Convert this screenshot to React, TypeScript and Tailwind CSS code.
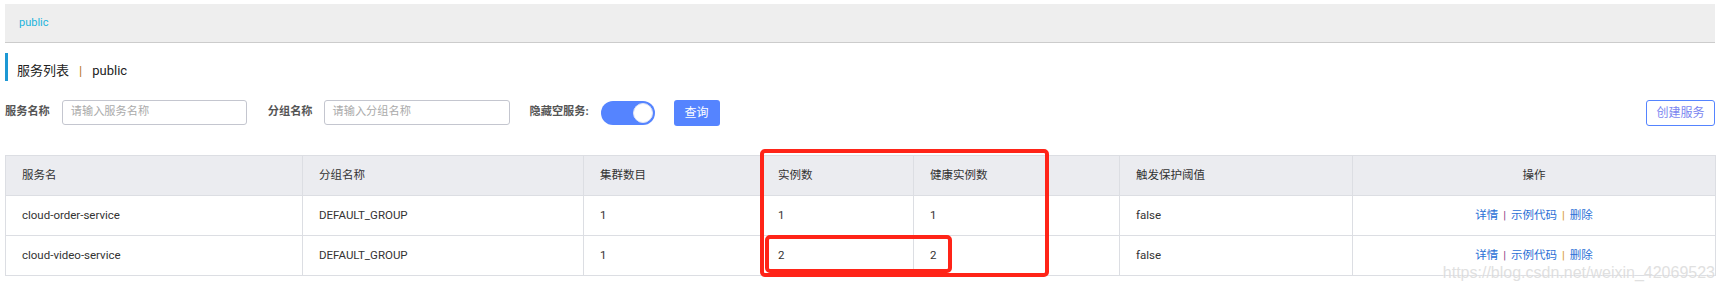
import React from 'react';

const font = { fontFamily: 'Roboto, "Noto Sans CJK SC", sans-serif' };

const columns = [
  { title: '服务名', width: 297 },
  { title: '分组名称', width: 281 },
  { title: '集群数目', width: 178 },
  { title: '实例数', width: 152 },
  { title: '健康实例数', width: 206 },
  { title: '触发保护阈值', width: 233 },
  { title: '操作', width: 363 },
];

const rows = [
  { name: 'cloud-order-service', group: 'DEFAULT_GROUP', clusters: 1, instances: 1, healthy: 1, threshold: 'false' },
  { name: 'cloud-video-service', group: 'DEFAULT_GROUP', clusters: 1, instances: 2, healthy: 2, threshold: 'false' },
];

function Actions() {
  return (
    <span className="text-[#2a6fd6]">
      详情
      <span className="mx-[5px] text-[#8a3f8a]">|</span>
      示例代码
      <span className="mx-[5px] text-[#d8962f]">|</span>
      删除
    </span>
  );
}

export default function App() {
  return (
    <div className="relative h-[290px] bg-white pt-[4px] pl-[5px] pr-[9px] text-[#333]" style={font}>
      <div className="flex h-[39px] items-center border-b border-[#cccccc] bg-[#eeeeee] pl-[14px] text-[11px] text-[#22b4dc]">
        public
      </div>

      <div className="mt-[10px] flex h-[28px] items-center border-l-[3px] border-[#1d98d4] pl-[9px] pt-[8px] text-[13px] text-[#222]">
        <span>服务列表</span>
        <span className="mx-[10px] text-[#b8772a]">|</span>
        <span>public</span>
      </div>

      <div className="mt-[19px] flex h-[25px] items-center text-[11.2px]">
        <span className="font-bold text-[#555]">服务名称</span>
        <div className="ml-[12px] flex h-[25px] w-[185px] items-center rounded-[3px] border border-[#c4c6cf] pl-[8px] text-[#aaa]">
          请输入服务名称
        </div>
        <span className="ml-[21px] font-bold text-[#555]">分组名称</span>
        <div className="ml-[11px] flex h-[25px] w-[186px] items-center rounded-[3px] border border-[#c4c6cf] pl-[8px] text-[#aaa]">
          请输入分组名称
        </div>
        <span className="ml-[20px] font-bold text-[#555]">隐藏空服务:</span>
        <div className="ml-[12px] flex h-[24px] w-[54px] items-center justify-end rounded-full bg-[#5584ff] pr-[2px]">
          <div className="h-[20px] w-[20px] rounded-full border border-[#dfe4f5] bg-white" />
        </div>
        <button className="ml-[19px] h-[26px] w-[46px] rounded-[3px] bg-[#5584ff] text-[12px] text-white">查询</button>
        <button className="ml-auto h-[26px] w-[69px] rounded-[3px] border border-[#5584ff] bg-white text-[12px] text-[#7a86f0]">
          创建服务
        </button>
      </div>

      <table className="mt-[30px] w-[1710px] table-fixed border-collapse text-[11.5px]">
        <colgroup>
          {columns.map((c) => (
            <col key={c.title} style={{ width: c.width }} />
          ))}
        </colgroup>
        <thead>
          <tr className="h-[40px] bg-[#ebecf0]">
            {columns.map((c, i) => (
              <th
                key={c.title}
                className={`border border-[#dcdee3] px-4 font-normal text-[#333] ${i === 6 ? 'text-center' : 'text-left'}`}
              >
                {c.title}
              </th>
            ))}
          </tr>
        </thead>
        <tbody>
          {rows.map((r) => (
            <tr key={r.name} className="h-[40px]">
              <td className="border border-[#dcdee3] px-4">{r.name}</td>
              <td className="border border-[#dcdee3] px-4">{r.group}</td>
              <td className="border border-[#dcdee3] px-4">{r.clusters}</td>
              <td className="border border-[#dcdee3] px-4">{r.instances}</td>
              <td className="border border-[#dcdee3] px-4">{r.healthy}</td>
              <td className="border border-[#dcdee3] px-4">{r.threshold}</td>
              <td className="border border-[#dcdee3] px-4 text-center">
                <Actions />
              </td>
            </tr>
          ))}
        </tbody>
      </table>

      {/* annotation boxes drawn over the table */}
      <div className="pointer-events-none absolute left-[760px] top-[149px] h-[128px] w-[289px] rounded-[5px] border-[4px] border-[#ff2418]" />
      <div className="pointer-events-none absolute left-[765px] top-[235px] h-[38px] w-[187px] rounded-[5px] border-[4px] border-[#ff2418]" />

      <div
        className="pointer-events-none absolute right-[9px] top-[261px] text-[16px] text-[#d6d6d6] opacity-75"
        style={{ fontFamily: '"Liberation Sans", Arial, sans-serif', textShadow: '0 0 1px #fff, 0 0 1px #fff' }}
      >
        https://blog.csdn.net/weixin_42069523
      </div>
    </div>
  );
}
